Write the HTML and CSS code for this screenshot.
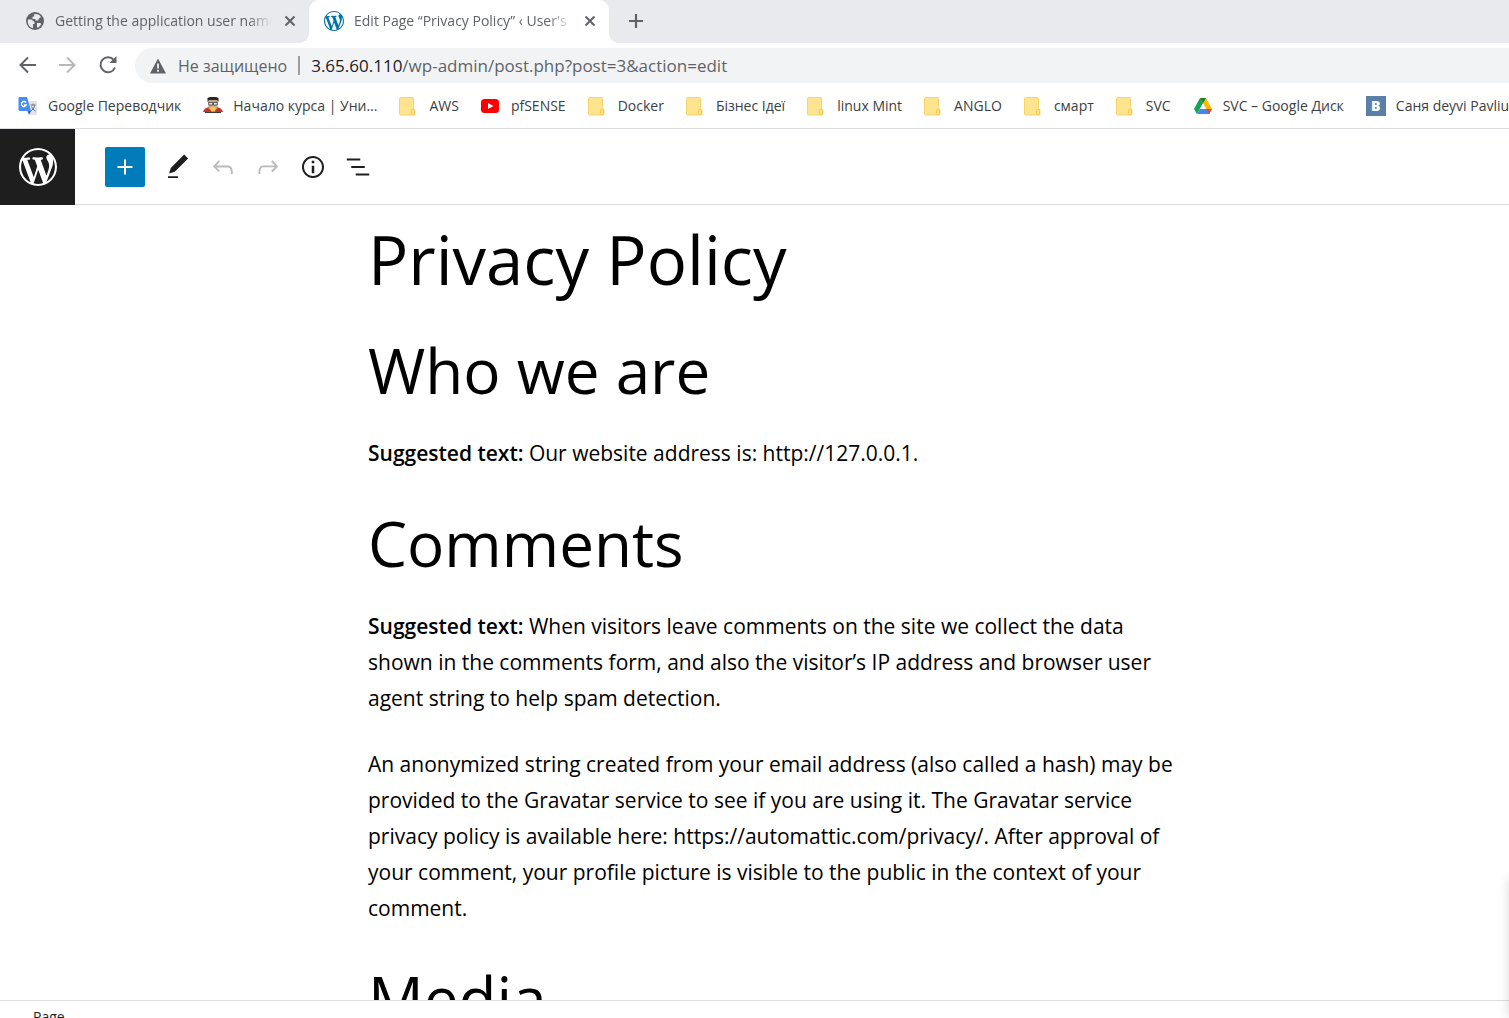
FILE: index.html
```html
<!DOCTYPE html>
<html lang="en">
<head>
<meta charset="utf-8">
<title>Edit Page “Privacy Policy”</title>
<link rel="stylesheet" href="styles.css">
</head>
<body>
<svg class="sprite" aria-hidden="true">
  <symbol id="wordpress" viewBox="0 0 20 20"><path d="M20 10c0-5.51-4.49-10-10-10C4.48 0 0 4.49 0 10c0 5.52 4.48 10 10 10 5.51 0 10-4.48 10-10zM7.78 15.37L4.37 6.22c.55-.02 1.17-.08 1.17-.08.5-.06.44-1.13-.06-1.11 0 0-1.45.11-2.37.11-.18 0-.37 0-.58-.01C4.12 2.69 6.87 1.11 10 1.11c2.33 0 4.45.87 6.05 2.34-.68-.11-1.65.39-1.65 1.58 0 .74.45 1.36.9 2.1.35.61.55 1.36.55 2.46 0 1.49-1.4 5-1.4 5l-3.03-8.37c.54-.02.82-.17.82-.17.5-.05.44-1.25-.06-1.22 0 0-1.44.12-2.38.12-.87 0-2.33-.12-2.33-.12-.5-.03-.56 1.2-.06 1.22l.92.08 1.26 3.41zM17.41 10c.24-.64.74-1.87.43-4.25.7 1.29 1.05 2.71 1.05 4.25 0 3.29-1.73 6.24-4.4 7.78.97-2.59 1.94-5.2 2.92-7.78zM6.1 18.09C3.12 16.65 1.11 13.53 1.11 10c0-1.3.23-2.48.72-3.59C3.25 10.3 4.67 14.2 6.1 18.09zm4.03-6.63l2.58 6.98c-.86.29-1.76.45-2.71.45-.79 0-1.57-.11-2.29-.33.81-2.38 1.62-4.74 2.42-7.1z"/></symbol>
  <symbol id="folder" viewBox="0 0 20 20"><path d="M.5 2.500q0-1 1-1h12q1 0 1 1v10l1.500 1.500v4q0 1-1 1h-13.500q-1 0-1-1z" fill="#ffe48f" stroke="#f5d568"/><rect x="12.500" y="13.500" width="3" height="5" rx="1" fill="#ffe48f" stroke="#f2ca49"/></symbol>
  <symbol id="close" viewBox="0 0 12 12"><path d="M1.500 1.500l9 9M10.500 1.500l-9 9" stroke="#5f6368" stroke-width="2"/></symbol>
</svg>
<div class="browser">
  <nav class="tabs" aria-label="Tabs">
    <div class="tab">
      <svg class="favicon" viewBox="0 0 20 20"><circle cx="10" cy="10" r="9" fill="#5f6368"/><path d="M3 8.500h3.500l3 2.500v2H8v4C4 16.500 2 12 3 8.500zM8.500 3.500c3-1.500 6 0 7.500 2.500l-2 1.500-1 2h-2.500V8h-3V6l2-1zM12 12h3l1.500 1-3 3.500H12z" fill="#e8eaed"/></svg>
      <a class="tab-title" href="#">Getting the application user name</a>
      <button class="tab-close" aria-label="Close tab"><svg><use href="#close"/></svg></button>
    </div>
    <div class="tab tab-active">
      <svg class="favicon" fill="#0073aa"><use href="#wordpress"/></svg>
      <a class="tab-title" href="#">Edit Page “Privacy Policy” ‹ User's Blog</a>
      <button class="tab-close" aria-label="Close tab"><svg><use href="#close"/></svg></button>
    </div>
    <button class="new-tab" aria-label="New tab"><svg viewBox="0 0 16 16"><path d="M8 1v14M1 8h14" stroke="#5f6368" stroke-width="2.200"/></svg></button>
  </nav>

  <div class="toolbar">
    <button class="nav-button" aria-label="Back"><svg viewBox="0 0 20 20"><path d="M18 9H3M10 1.500L2.500 9l7.500 7.500" /></svg></button>
    <button class="nav-button nav-disabled" aria-label="Forward" disabled><svg viewBox="0 0 20 20"><path d="M1 9h15M9 1.500L16.500 9 9 16.500"/></svg></button>
    <button class="nav-button" aria-label="Reload"><svg viewBox="0 0 20 20"><path d="M17 11.500A7.500 7.500 0 1 1 15.800 4"/><path d="M18.500 0v7h-7z" fill="#5f6368" stroke="none"/></svg></button>
    <div class="omnibox">
      <button class="security"><svg viewBox="0 0 18 18"><path d="M9 1.500L17 16.500H1z" fill="#5f6368"/><path d="M9 6.500v5M9 12.800v2" stroke="#f1f3f4" stroke-width="1.800"/></svg>Не защищено</button>
      <span class="divider"></span>
      <label class="host" for="address">3.65.60.110</label>
      <input class="address" id="address" type="text" value="/wp-admin/post.php?post=3&amp;action=edit" spellcheck="false">
    </div>
  </div>

  <nav class="bookmarks" aria-label="Bookmarks">
    <a class="bookmark" href="#"><svg viewBox="0 0 20 20"><path d="M8 5h10q1 0 1 1v12q0 1-1 1h-6z" fill="#e1e3e6"/><path d="M1.500 1H9l4 14H2q-1.500 0-1.500-1.500V2q0-1 1-1z" fill="#4b8bf5"/><path d="M9.500 15H13l-2 4z" fill="#2f5fcf"/><path d="M8 6.500A2.500 2.500 0 1 0 8.300 9H6" fill="none" stroke="#fff" stroke-width="1.300"/><path d="M12.500 9h5M15 7.500V9M17 9q-1 4-4 6M13.500 10.500q1 3 4 4.500" fill="none" stroke="#66788a"/></svg>Google Переводчик</a>
    <a class="bookmark" href="#"><svg viewBox="0 0 20 20"><path d="M0 16q1-4 6-5h8q5 1 6 5z" fill="#c8322b"/><path d="M5 4h10l-.5 8.500-4.500 3-4.500-3z" fill="#c9a68a"/><path d="M4.500 6L4.500 2l2.500-1h6l2.500 1v4L14 4H6z" fill="#292522"/><path d="M5.500 6.500h4v2.500H6zM10.500 6.500h4L14 9h-3.500z" fill="#e8e8e8" stroke="#444" stroke-width=".8"/><path d="M7 11.500q3-2 6 0l-1 4H8z" fill="#f0c94a"/><path d="M2 16.500h16" stroke="#423a36"/></svg>Начало курса | Уни...</a>
    <a class="bookmark" href="#"><svg><use href="#folder"/></svg>AWS</a>
    <a class="bookmark" href="#"><svg viewBox="0 0 20 20"><rect x="0" y="3" width="18" height="14" rx="3.500" fill="#f00"/><path d="M7 7l5.500 3L7 13z" fill="#fff"/></svg>pfSENSE</a>
    <a class="bookmark" href="#"><svg><use href="#folder"/></svg>Docker</a>
    <a class="bookmark" href="#"><svg><use href="#folder"/></svg>Бізнес Ідеї</a>
    <a class="bookmark" href="#"><svg><use href="#folder"/></svg>linux Mint</a>
    <a class="bookmark" href="#"><svg><use href="#folder"/></svg>ANGLO</a>
    <a class="bookmark" href="#"><svg><use href="#folder"/></svg>смарт</a>
    <a class="bookmark" href="#"><svg><use href="#folder"/></svg>SVC</a>
    <a class="bookmark" href="#"><svg viewBox="0 0 20 20"><path d="M7 2h6L4 18l-3-5z" fill="#14a456"/><path d="M7 2h6l-3 5z" fill="#188038"/><path d="M7 2h6l6 11h-6z" fill="#fbbc04"/><path d="M7 2h6l-3 5.300z" fill="#188038"/><path d="M7 13h12l-3 5H4z" fill="#4285f4"/><path d="M13 13h6l-3 5z" fill="#ea4335"/><path d="M10 7.500L13.200 13H6.800z" fill="#fff"/></svg>SVC – Google Диск</a>
    <a class="bookmark" href="#"><span class="vk-icon" aria-hidden="true">B</span>Саня deyvi Pavliuk</a>
  </nav>

  <header class="editor-header">
    <a class="wp-home" href="#" aria-label="View Pages"><svg><use href="#wordpress"/></svg></a>
    <div class="editor-tools">
      <button class="inserter" aria-label="Add block"><svg viewBox="0 0 24 24"><path d="M18 11.200h-5.200V6h-1.600v5.200H6v1.600h5.200V18h1.600v-5.200H18z"/></svg></button>
      <button class="tool" aria-label="Tools"><svg viewBox="0 0 24 24"><path d="M20.100 5.100L16.900 2 6.200 12.700l-1.300 4.400 4.500-1.300L20.100 5.100zM4 20.800h8v-1.500H4v1.500z"/></svg></button>
      <button class="tool" aria-label="Undo" disabled><svg viewBox="0 0 24 24"><path d="M18.300 11.700c-.6-.6-1.400-.9-2.300-.9H6.700l2.900-3.300-1.100-1-4.500 5L8.500 16l1-1-2.700-2.700H16c.5 0 .9.2 1.300.5 1 1 1 3.400 1 4.500v.3h1.500v-.2c0-1.500 0-4.300-1.500-5.700z"/></svg></button>
      <button class="tool" aria-label="Redo" disabled><svg viewBox="0 0 24 24"><path d="M15.600 6.500l-1.100 1 2.900 3.300H8c-.9 0-1.700.3-2.300.9-1.400 1.500-1.400 4.200-1.400 5.600v.2h1.500v-.3c0-1.100 0-3.500 1-4.500.3-.3.7-.5 1.300-.5h9.200L14.500 15l1.100 1.100 4.600-4.600-4.600-5z"/></svg></button>
      <button class="tool" aria-label="Details"><svg viewBox="0 0 24 24"><path d="M12 3.200c-4.800 0-8.800 3.900-8.800 8.800 0 4.800 3.900 8.800 8.800 8.800 4.800 0 8.800-3.900 8.800-8.800 0-4.800-4-8.800-8.800-8.800zm0 16c-4 0-7.200-3.300-7.200-7.200C4.800 8 8 4.800 12 4.800s7.200 3.300 7.200 7.200c0 4-3.200 7.200-7.200 7.200zM11 17h2v-6h-2v6zm0-8h2V7h-2v2z"/></svg></button>
      <button class="tool" aria-label="List view"><svg viewBox="0 0 24 24"><path d="M13.800 5.200H3v1.500h10.800V5.200zm-3.600 12v1.500H21v-1.500H10.200zm7.200-6H6.600v1.500h10.800v-1.500z"/></svg></button>
    </div>
  </header>

  <main class="canvas">
    <article class="post">
      <h1>Privacy Policy</h1>
      <h2>Who we are</h2>
      <p><strong>Suggested text:</strong> Our website address is: http://127.0.0.1.</p>
      <h2>Comments</h2>
      <p><strong>Suggested text:</strong> When visitors leave comments on the site we collect the data shown in the comments form, and also the visitor’s IP address and browser user agent string to help spam detection.</p>
      <p>An anonymized string created from your email address (also called a hash) may be provided to the Gravatar service to see if you are using it. The Gravatar service privacy policy is available here: https://automattic.com/privacy/. After approval of your comment, your profile picture is visible to the public in the context of your comment.</p>
      <h2>Media</h2>
    </article>
  </main>
  <footer class="breadcrumb">Page</footer>
  <div class="edge-shadow"></div>
</div>
</body>
</html>
```
FILE: styles.css
```css
* { box-sizing: border-box; }
body {
  margin: 0;
  font-family: "Open Sans", "Noto Sans", sans-serif;
  font-size: 14px;
  color: #3c4043;
  background: #fff;
}
button, input {
  font: inherit;
  color: inherit;
  border: 0;
  padding: 0;
  background: none;
}
a { color: inherit; text-decoration: none; }
svg { display: block; flex: none; }
.sprite { position: absolute; width: 0; height: 0; }

.browser {
  position: relative;
  display: flex;
  flex-direction: column;
  height: 100vh;
  overflow: hidden;
}

/* Tab strip */
.tabs {
  flex: none;
  display: flex;
  height: 43px;
  padding-left: 9px;
  background: #e8eaed;
}
.tab {
  display: flex;
  align-items: center;
  width: 300px;
  padding: 0 9px 2px 16px;
  color: #5f6368;
}
.tab-active {
  position: relative;
  padding-left: 15px;
  background: #fff;
  border-radius: 10px 10px 0 0;
}
.tab-active::before,
.tab-active::after {
  content: "";
  position: absolute;
  bottom: 0;
  width: 10px;
  height: 10px;
}
.tab-active::before { right: 100%; background: radial-gradient(circle at 0 0, #e8eaed 10px, #fff 10px); }
.tab-active::after { left: 100%; background: radial-gradient(circle at 100% 0, #e8eaed 10px, #fff 10px); }
.favicon { width: 20px; height: 20px; margin-right: 10px; }
.tab-title {
  flex: 1;
  min-width: 0;
  overflow: hidden;
  white-space: nowrap;
  mask-image: linear-gradient(to left, transparent, #000 24px);
}
.tab-close { margin-left: 8px; padding: 4px; }
.tab-close svg { width: 12px; height: 12px; }
.new-tab { padding: 0 19px 2px; }
.new-tab svg { width: 16px; height: 16px; }

/* Address row */
.toolbar {
  flex: none;
  display: flex;
  align-items: center;
  height: 45px;
  padding-left: 8px;
}
.nav-button { width: 40px; padding: 0 10px; }
.nav-button svg { width: 20px; height: 20px; fill: none; stroke: #5f6368; stroke-width: 2; }
.nav-disabled { opacity: .45; }
.omnibox {
  flex: 1;
  display: flex;
  align-items: center;
  height: 35px;
  margin-left: 7px;
  padding-left: 14px;
  border-radius: 18px 0 0 18px;
  background: #f1f3f4;
  font-size: 17px;
  color: #5f6368;
}
.security { display: flex; align-items: center; gap: 11px; font-size: 16px; }
.security svg { width: 18px; height: 18px; }
.divider { width: 2px; height: 19px; margin: 0 11px; background: #9aa0a6; }
.host { color: #202124; }
.address { flex: 1; min-width: 0; outline: 0; }

/* Bookmarks */
.bookmarks {
  flex: none;
  display: flex;
  gap: 22px;
  height: 41px;
  padding: 0 0 5px 18px;
  border-bottom: 1px solid #dadce0;
  overflow: hidden;
}
.bookmark {
  flex: none;
  display: flex;
  align-items: center;
  gap: 10px;
  white-space: nowrap;
}
.bookmark svg { width: 20px; height: 20px; }
.vk-icon {
  width: 20px;
  background: #5b7fa9;
  color: #fff;
  font-weight: 800;
  line-height: 20px;
  text-align: center;
}

/* Editor top bar */
.editor-header {
  flex: none;
  display: flex;
  height: 76px;
  border-bottom: 1px solid #ddd;
}
.wp-home {
  display: grid;
  place-items: center;
  width: 75px;
  height: 76px;
  background: #1e1e1e;
}
.wp-home svg { width: 38px; height: 38px; fill: #fff; }
.editor-tools { display: flex; align-items: center; padding-left: 30px; }
.editor-tools svg { width: 30px; height: 30px; fill: #1e1e1e; }
.inserter {
  width: 40px;
  height: 40px;
  margin-right: 10px;
  padding: 5px;
  border-radius: 2px;
  background: #007cba;
}
.editor-tools .inserter svg { fill: #fff; }
.tool { display: grid; place-items: center; width: 45px; }
.tool:disabled { opacity: .3; }

/* Document */
.canvas {
  flex: 1;
  min-height: 0;
  padding: 8px 0 0 39px;
  overflow: hidden;
}
.post {
  max-width: 812px;
  margin: 0 auto;
  font-size: 21px;
  line-height: 36px;
  color: #000;
}
h1, h2 { margin: 0; font-weight: 400; }
h1 { font-size: 67px; line-height: 92px; }
h2 { margin: 30px 0 23px; font-size: 62px; line-height: 84px; }
h1 + h2 { margin-top: 23px; }
p { margin: 0 0 30px; }
strong { font-weight: 600; }

.breadcrumb {
  flex: none;
  height: 18px;
  padding: 6px 33px 0;
  border-top: 1px solid #ddd;
  line-height: 20px;
  overflow: hidden;
  background: #fff;
  color: #1e1e1e;
}
.edge-shadow {
  position: absolute;
  left: 100%;
  top: 880px;
  bottom: 0;
  width: 20px;
  box-shadow: 0 0 12px rgba(0, 0, 0, .16);
}
```
